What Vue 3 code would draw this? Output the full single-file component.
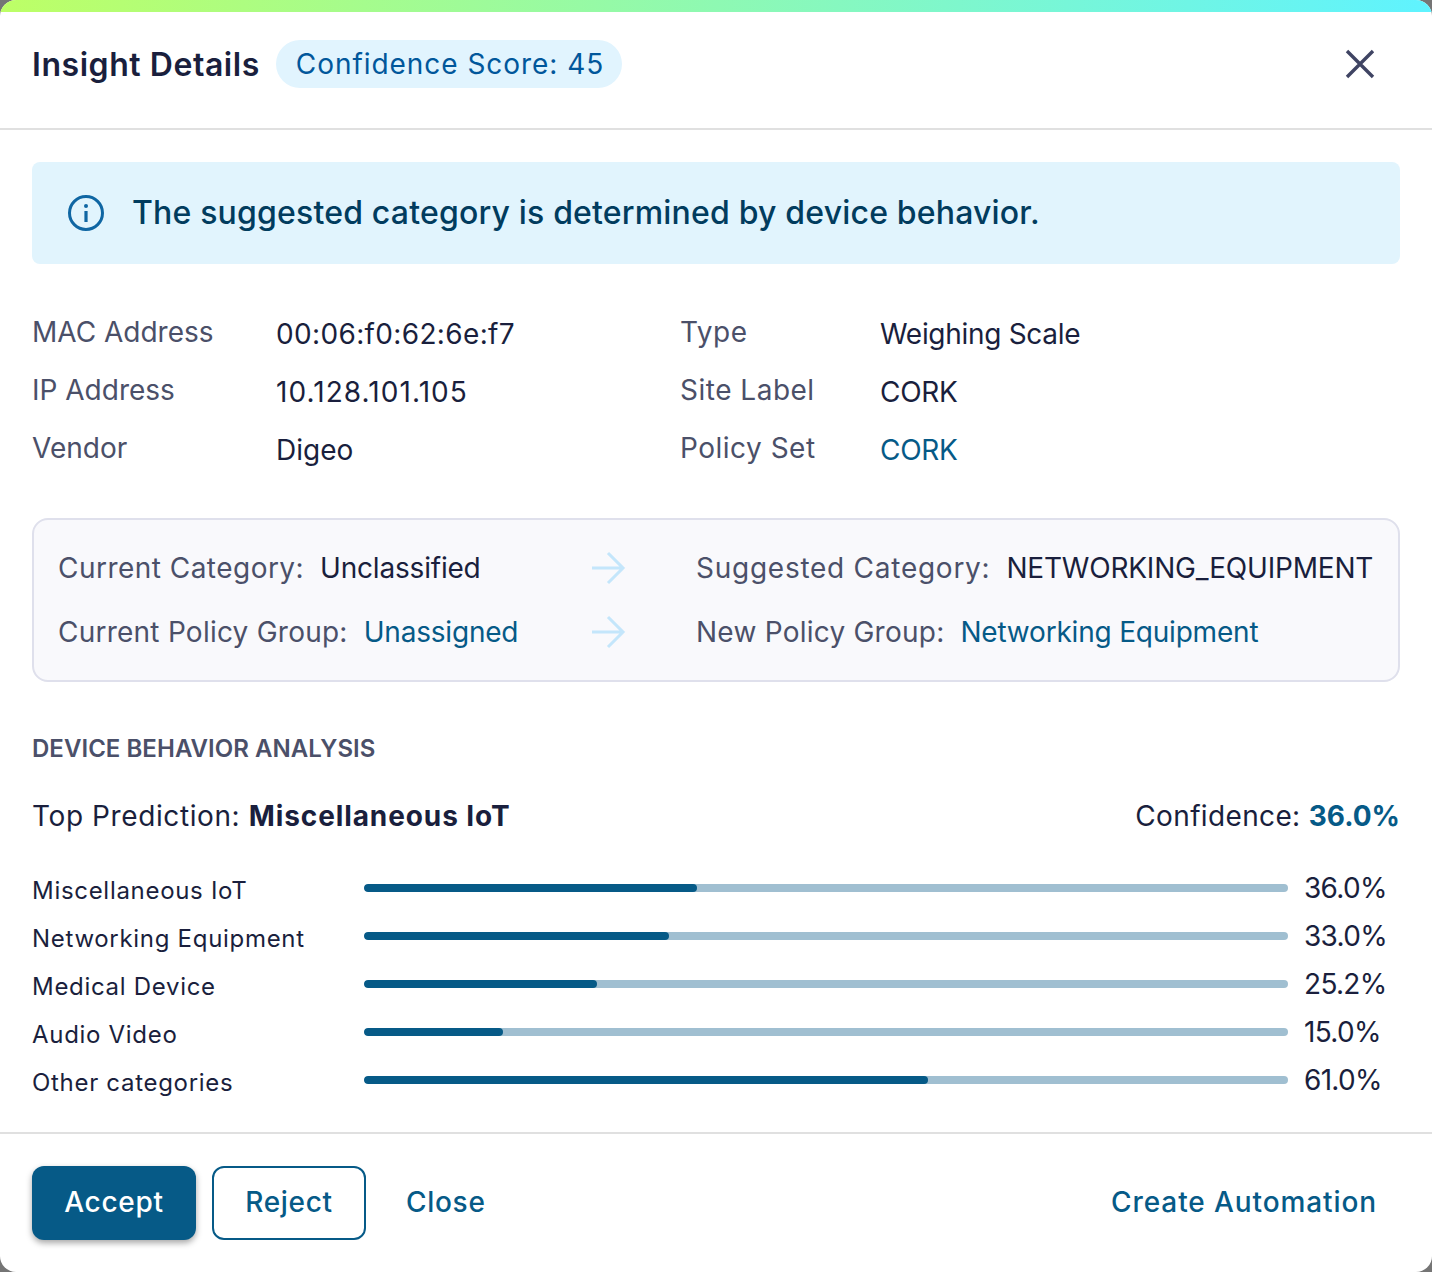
<template>
  <div class="modal">
    <div class="accent"></div>

    <div class="modal-header">
      <div class="title">Insight Details</div>
      <div class="score-pill">Confidence Score: 45</div>
      <svg class="close-icon" width="32" height="32" viewBox="0 0 32 32">
        <path d="M3 3L29 29M29 3L3 29" stroke="#3f4463" stroke-width="3.4" fill="none" />
      </svg>
    </div>

    <div class="modal-body">
      <div class="alert">
        <svg class="alert-icon" width="40" height="40" viewBox="0 0 40 40" fill="none">
          <circle cx="20" cy="20" r="16.5" stroke="#0f66a3" stroke-width="3" />
          <rect x="18.4" y="18" width="3.2" height="11" fill="#0f66a3" />
          <circle cx="20" cy="13" r="2" fill="#0f66a3" />
        </svg>
        <span>The suggested category is determined by device behavior.</span>
      </div>

      <div class="details">
        <template v-for="row in details" :key="row.label">
          <div class="detail-label">{{ row.label }}</div>
          <div class="detail-value" :class="row.cls">{{ row.value }}</div>
        </template>
      </div>

      <div class="change-box">
        <div v-for="row in changes" :key="row.fromLabel" class="change-row">
          <div class="change-from">
            <span class="change-label">{{ row.fromLabel }}</span>
            <span class="change-value" :class="row.fromClass">{{ row.from }}</span>
          </div>
          <svg class="arrow" width="36" height="36" viewBox="0 0 36 36" fill="none">
            <path d="M2 18H33M18 3L33 18L18 33" stroke="#c4e6fb" stroke-width="3" />
          </svg>
          <div class="change-to">
            <span class="change-label" :class="row.toLabelClass">{{ row.toLabel }}</span>
            <span class="change-value" :class="row.toClass">{{ row.to }}</span>
          </div>
        </div>
      </div>

      <div class="section-title">DEVICE BEHAVIOR ANALYSIS</div>

      <div class="prediction">
        <div>Top Prediction: <strong>Miscellaneous IoT</strong></div>
        <div class="confidence">Confidence: <strong class="link pct">36.0%</strong></div>
      </div>

      <div class="bars">
        <div v-for="bar in bars" :key="bar.name" class="bar-row">
          <div class="bar-name">{{ bar.name }}</div>
          <div class="bar-track">
            <div class="bar-fill" :style="{ width: bar.value + '%' }"></div>
          </div>
          <div class="bar-value">{{ bar.value.toFixed(1) }}%</div>
        </div>
      </div>
    </div>

    <div class="modal-footer">
      <button class="btn btn-primary">Accept</button>
      <button class="btn btn-outline">Reject</button>
      <button class="btn btn-text">Close</button>
      <button class="btn btn-text automation">Create Automation</button>
    </div>
  </div>
</template>

<script setup>
const details = [
  { label: "MAC Address", value: "00:06:f0:62:6e:f7", cls: "mac" },
  { label: "Type", value: "Weighing Scale", cls: "tight" },
  { label: "IP Address", value: "10.128.101.105", cls: "ip" },
  { label: "Site Label", value: "CORK", cls: "tight" },
  { label: "Vendor", value: "Digeo" },
  { label: "Policy Set", value: "CORK", cls: "tight link" },
];

const changes = [
  {
    fromLabel: "Current Category:",
    from: "Unclassified",
    fromClass: "dark",
    toLabel: "Suggested Category:",
    toLabelClass: "wide",
    to: "NETWORKING_EQUIPMENT",
    toClass: "dark",
  },
  {
    fromLabel: "Current Policy Group:",
    from: "Unassigned",
    fromClass: "link",
    toLabel: "New Policy Group:",
    to: "Networking Equipment",
    toClass: "link",
  },
];

const bars = [
  { name: "Miscellaneous IoT", value: 36 },
  { name: "Networking Equipment", value: 33 },
  { name: "Medical Device", value: 25.2 },
  { name: "Audio Video", value: 15 },
  { name: "Other categories", value: 61 },
];
</script>

<style>
body {
  background: #757575;
}
</style>

<style scoped>
.modal {
  width: 1432px;
  height: 1272px;
  background: #fff;
  border-radius: 16px;
  overflow: hidden;
  display: flex;
  flex-direction: column;
  font-family: Inter, "Liberation Sans", sans-serif;
  color: #1a1f3d;
}

.accent {
  height: 12px;
  flex-shrink: 0;
  background: linear-gradient(90deg, #bdff66, #5ff3ff);
}

.modal-header {
  height: 118px;
  flex-shrink: 0;
  box-sizing: border-box;
  border-bottom: 2px solid #e0e0e0;
  padding: 0 56px 12px 32px;
  display: flex;
  align-items: center;
  gap: 16px;
}

.title {
  font-size: 32px;
  font-weight: 600;
  letter-spacing: 0.55px;
}

.score-pill {
  height: 48px;
  display: flex;
  align-items: center;
  padding: 0 18px 0 20px;
  border-radius: 24px;
  background: #e1f4fe;
  color: #01579b;
  font-size: 28px;
  letter-spacing: 0.95px;
}

.close-icon {
  margin-left: auto;
}

.modal-body {
  flex: 1;
  padding: 32px 32px 0;
  display: flex;
  flex-direction: column;
}

.alert {
  height: 102px;
  box-sizing: border-box;
  padding: 0 34px 2px;
  display: flex;
  align-items: center;
  gap: 26px;
  background: #e1f4fd;
  border-radius: 8px;
  color: #013c5e;
  font-size: 32px;
  font-weight: 500;
  letter-spacing: 0.18px;
}

.alert-icon {
  flex-shrink: 0;
  margin-top: 2px;
}

.details {
  margin-top: 41px;
  display: grid;
  grid-template-columns: 244px 404px 200px 1fr;
  grid-auto-rows: 58px;
  align-items: center;
  font-size: 28px;
}

.detail-label {
  color: #4b5069;
  margin-bottom: 4px;
}

.detail-label:nth-child(4n + 3) {
  letter-spacing: 0.5px;
}

.mac {
  letter-spacing: 0.35px;
}

.ip {
  letter-spacing: 1.07px;
}

.tight {
  letter-spacing: -0.3px;
}

.link {
  color: #065a87;
}

.dark {
  color: #1a1f3d;
}

.change-box {
  margin-top: 39px;
  height: 164px;
  box-sizing: border-box;
  padding: 16px 24px;
  border: 2px solid #dfe0ec;
  border-radius: 16px;
  background: #f9f9fc;
  display: flex;
  flex-direction: column;
  font-size: 28px;
}

.change-row {
  height: 64px;
  flex-shrink: 0;
  display: flex;
  align-items: center;
}

.change-from {
  width: 532px;
  flex-shrink: 0;
  white-space: nowrap;
}

.arrow {
  flex-shrink: 0;
}

.change-to {
  margin-left: 70px;
  white-space: nowrap;
}

.change-label {
  color: #4b5069;
  margin-right: 16px;
  letter-spacing: 0.47px;
}

.change-row:nth-child(2) .change-label {
  letter-spacing: 0.24px;
}

.change-label.wide {
  letter-spacing: 0.74px;
}

.change-value {
  letter-spacing: -0.2px;
}

.section-title {
  margin-top: 52px;
  color: #4b5069;
  font-size: 24px;
  font-weight: 600;
  letter-spacing: 0.04px;
}

.prediction {
  margin-top: 36px;
  display: flex;
  justify-content: space-between;
  font-size: 28px;
  letter-spacing: 0.6px;
}

.confidence {
  letter-spacing: 0.35px;
}

.prediction strong {
  font-weight: 700;
  letter-spacing: 0.9px;
}

.prediction strong.pct {
  letter-spacing: 0;
}

.bars {
  margin-top: 31px;
  display: flex;
  flex-direction: column;
}

.bar-row {
  height: 48px;
  display: flex;
  align-items: center;
}

.bar-name {
  width: 332px;
  flex-shrink: 0;
  font-size: 24px;
  letter-spacing: 0.7px;
  margin-top: 4px;
}

.bar-track {
  flex: 1;
  height: 8px;
  border-radius: 4px;
  background: #a0bfd1;
  overflow: hidden;
}

.bar-fill {
  height: 100%;
  border-radius: 4px;
  background: #065a87;
}

.bar-value {
  width: 112px;
  flex-shrink: 0;
  box-sizing: border-box;
  padding-left: 16px;
  font-size: 28px;
  letter-spacing: -0.7px;
}

.modal-footer {
  height: 140px;
  flex-shrink: 0;
  box-sizing: border-box;
  border-top: 2px solid #e0e0e0;
  padding: 32px;
  display: flex;
  align-items: flex-start;
  gap: 16px;
}

.btn {
  height: 74px;
  box-sizing: border-box;
  border-radius: 12px;
  border: none;
  background: transparent;
  font-family: inherit;
  font-size: 28px;
  font-weight: 500;
  letter-spacing: 0.7px;
  color: #065a87;
  padding: 0 24px 2px;
}

.btn-primary {
  width: 164px;
  background: #065a87;
  color: #fff;
  box-shadow: 0 3px 6px rgba(0, 0, 0, 0.35);
}

.btn-outline {
  width: 154px;
  border: 2px solid #065a87;
}

.automation {
  margin-left: auto;
  padding-right: 23px;
  letter-spacing: 0.9px;
}
</style>
